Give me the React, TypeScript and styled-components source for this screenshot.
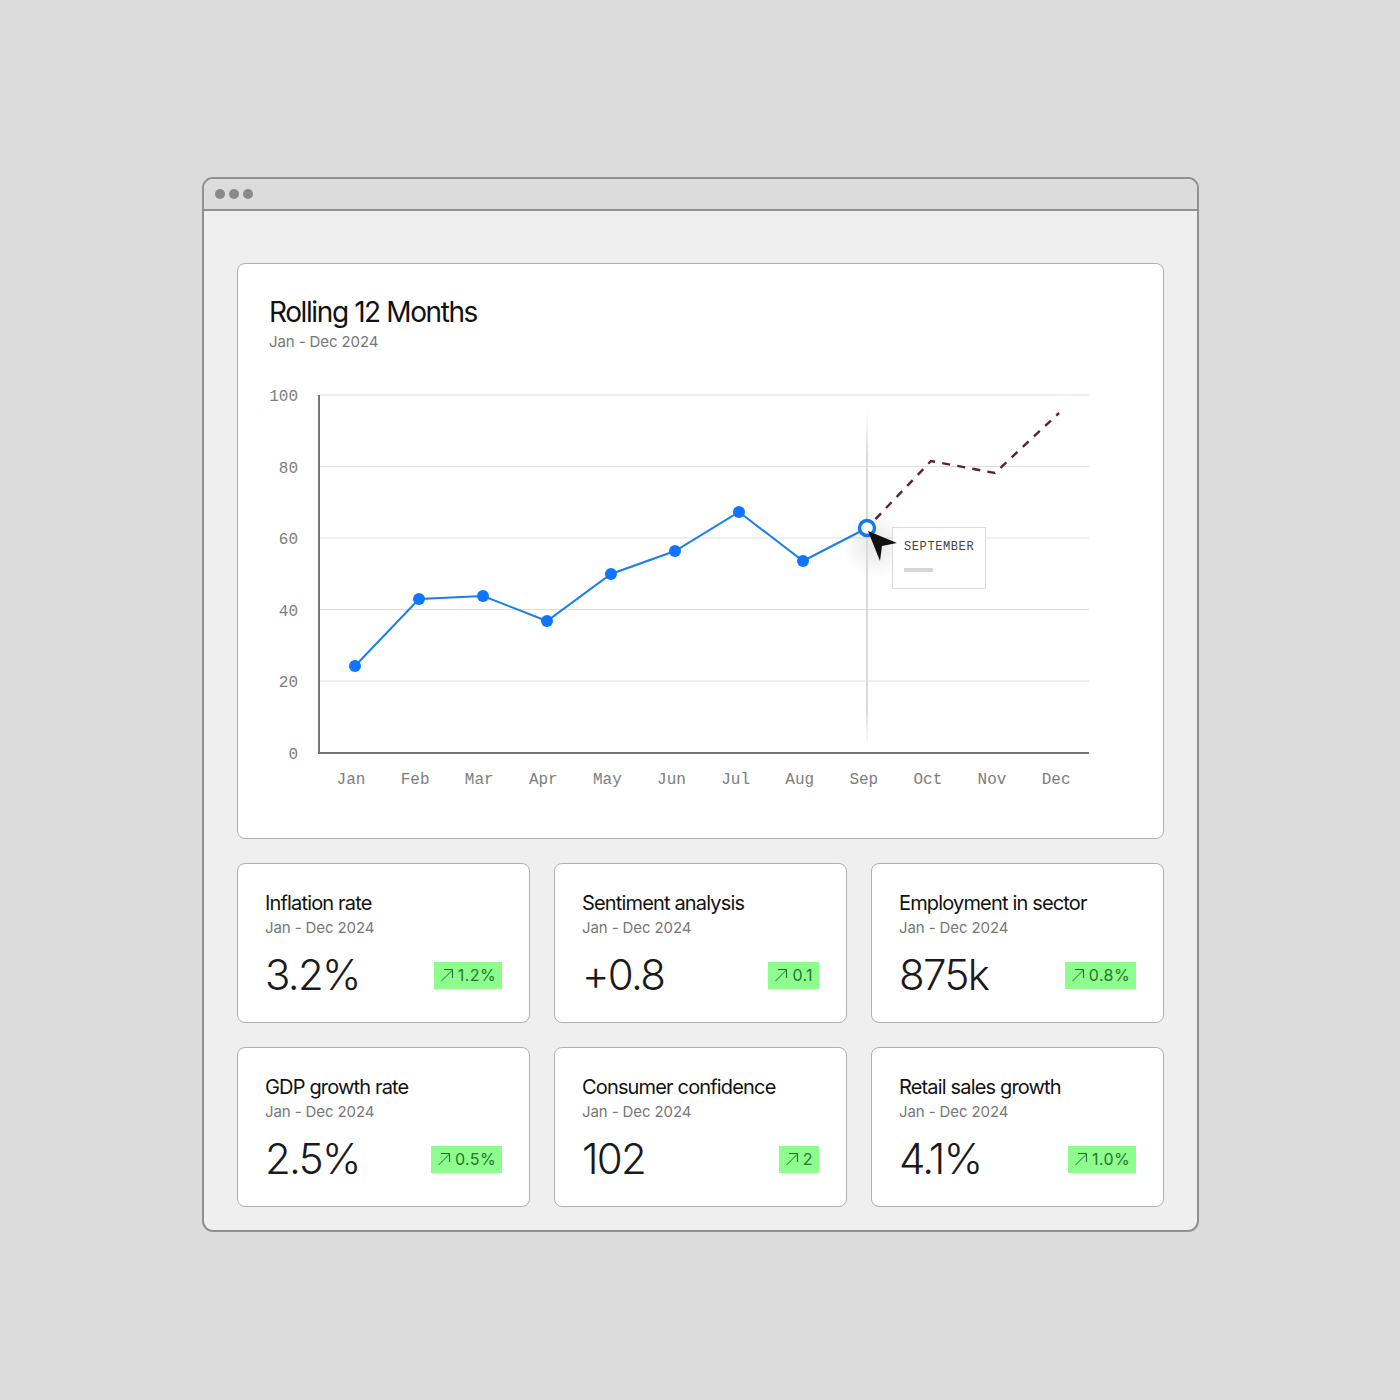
import styled, { createGlobalStyle } from 'styled-components';

const months = ['Jan', 'Feb', 'Mar', 'Apr', 'May', 'Jun', 'Jul', 'Aug', 'Sep', 'Oct', 'Nov', 'Dec'];
const ticks = [
  { label: '100', y: 395 },
  { label: '80', y: 466.5 },
  { label: '60', y: 538 },
  { label: '40', y: 609.5 },
  { label: '20', y: 681 },
  { label: '0', y: 753 },
];
const points = [
  [355, 666], [419, 599], [483, 596], [547, 621], [611, 574],
  [675, 551], [739, 512], [803, 561],
];
const stats = [
  { title: 'Inflation rate', value: '3.2%', change: '1.2%' },
  { title: 'Sentiment analysis', value: '+0.8', change: '0.1' },
  { title: 'Employment in sector', value: '875k', change: '0.8%' },
  { title: 'GDP growth rate', value: '2.5%', change: '0.5%' },
  { title: 'Consumer confidence', value: '102', change: '2' },
  { title: 'Retail sales growth', value: '4.1%', change: '1.0%' },
];

const TrendArrow = () => (
  <svg width="14" height="14" viewBox="0 0 14 14" fill="none" stroke="#1c6b2a" strokeWidth="1">
    <path d="M1.5 13 L12.5 2 M4 1.5 H12.5 V10" />
  </svg>
);

const Chart = () => (
  <svg width="830" height="420" viewBox="269 380 830 420">
    <defs>
      <linearGradient id="hoverLine" x1="0" y1="0" x2="0" y2="1">
        <stop offset="0" stopColor="#dadada" stopOpacity="0" />
        <stop offset="0.14" stopColor="#dadada" />
        <stop offset="0.88" stopColor="#dadada" />
        <stop offset="1" stopColor="#dadada" stopOpacity="0" />
      </linearGradient>
      <radialGradient id="hoverGlow">
        <stop offset="0" stopColor="#000" stopOpacity="0.1" />
        <stop offset="1" stopColor="#000" stopOpacity="0" />
      </radialGradient>
    </defs>
    {ticks.slice(0, 5).map((t) => (
      <line key={t.label} x1="319" x2="1089" y1={t.y} y2={t.y} stroke="#dedede" />
    ))}
    <path d="M319 395 V753 H1089" fill="none" stroke="#767676" strokeWidth="2" />
    {ticks.map((t) => (
      <AxisText key={t.label} x="298" y={t.y + 6} textAnchor="end">{t.label}</AxisText>
    ))}
    {months.map((m, i) => (
      <AxisText key={m} x={351 + i * 64.1} y="784" textAnchor="middle">{m}</AxisText>
    ))}
    <circle cx="875" cy="545" r="32" fill="url(#hoverGlow)" />
    <rect x="866" y="410" width="2" height="338" fill="url(#hoverLine)" />
    <path
      d="M867 528 L931 461 L995 473 L1059 413"
      fill="none"
      stroke="#5e2129"
      strokeWidth="2.4"
      strokeDasharray="8 7.3"
      strokeDashoffset="3"
    />
    <polyline
      points={[...points, [867, 528]].map((p) => p.join(',')).join(' ')}
      fill="none"
      stroke="#1a7fe8"
      strokeWidth="2"
    />
    {points.map(([x, y]) => (
      <circle key={x} cx={x} cy={y} r="6" fill="#0f75ff" />
    ))}
    <circle cx="867" cy="528" r="7.5" fill="#fff" stroke="#1477ea" strokeWidth="3.4" />
  </svg>
);

export default function App() {
  return (
    <Page>
      <GlobalStyle />
      <BrowserWindow>
        <TitleBar>
          <Dot />
          <Dot />
          <Dot />
        </TitleBar>
        <Content>
          <ChartCard>
            <ChartTitle>Rolling 12 Months</ChartTitle>
            <ChartPeriod>Jan - Dec 2024</ChartPeriod>
            <ChartArea>
              <Chart />
              <Tooltip>
                <TooltipLabel>SEPTEMBER</TooltipLabel>
                <TooltipBar />
              </Tooltip>
              <Cursor width="34" height="34" viewBox="0 0 34 34">
                <path d="M2 2 L31 14 L16 17 L14 32 Z" fill="#111" />
              </Cursor>
            </ChartArea>
          </ChartCard>
          <StatGrid>
            {stats.map((s) => (
              <StatCard key={s.title}>
                <StatTitle>{s.title}</StatTitle>
                <StatPeriod>Jan - Dec 2024</StatPeriod>
                <StatRow>
                  <StatValue>{s.value}</StatValue>
                  <Badge>
                    <TrendArrow />
                    {s.change}
                  </Badge>
                </StatRow>
              </StatCard>
            ))}
          </StatGrid>
        </Content>
      </BrowserWindow>
    </Page>
  );
}

const GlobalStyle = createGlobalStyle`
  html, body {
    margin: 0;
    padding: 0;
    background: #dcdcdc;
  }
  * {
    box-sizing: border-box;
  }
`;

const Page = styled.div`
  width: 1400px;
  height: 1400px;
  padding: 177px 0 0 202px;
  font-family: Inter, "Liberation Sans", sans-serif;
  color: #111;
`;

const BrowserWindow = styled.div`
  width: 997px;
  height: 1055px;
  background: #efefef;
  border: 2px solid #909090;
  border-radius: 11px;
  overflow: hidden;
`;

const TitleBar = styled.div`
  height: 32px;
  padding-left: 11px;
  display: flex;
  align-items: center;
  gap: 4px;
  background: #dcdcdc;
  border-bottom: 2px solid #909090;
`;

const Dot = styled.span`
  width: 10px;
  height: 10px;
  border-radius: 50%;
  background: #8a8a8a;
`;

const Content = styled.div`
  padding: 52px 33px 0;
  display: flex;
  flex-direction: column;
  gap: 24px;
`;

const ChartCard = styled.section`
  height: 576px;
  padding: 31px 31px 0;
  background: #fff;
  border: 1px solid #b0b0b0;
  border-radius: 8px;
`;

const ChartTitle = styled.h1`
  margin: 0;
  font-size: 28px;
  line-height: 34px;
  font-weight: 400;
  letter-spacing: -0.05em;
`;

const ChartPeriod = styled.div`
  margin-top: 2px;
  font-size: 15px;
  line-height: 22px;
  letter-spacing: -0.1px;
  color: #777;
`;

const ChartArea = styled.div`
  position: relative;
  margin-top: 27px;
`;

const AxisText = styled.text`
  font-family: "Liberation Mono", monospace;
  font-size: 16px;
  fill: #7d7d7d;
`;

const Tooltip = styled.div`
  position: absolute;
  left: 623px;
  top: 147px;
  width: 94px;
  height: 62px;
  padding: 12px 11px 0;
  background: #fff;
  border: 1px solid #dcdcdc;
`;

const TooltipLabel = styled.div`
  font-family: "Liberation Mono", monospace;
  font-size: 12px;
  line-height: 14px;
  letter-spacing: 0.6px;
  color: #444;
`;

const TooltipBar = styled.div`
  width: 29px;
  height: 4px;
  margin-top: 14px;
  background: #d6d6d6;
`;

const Cursor = styled.svg`
  position: absolute;
  left: 597px;
  top: 149px;
`;

const StatGrid = styled.div`
  display: grid;
  grid-template-columns: repeat(3, 293px);
  grid-auto-rows: 160px;
  gap: 24px;
`;

const StatCard = styled.article`
  padding: 27px 27px 0;
  background: #fff;
  border: 1px solid #b0b0b0;
  border-radius: 8px;
`;

const StatTitle = styled.h2`
  margin: 0;
  font-size: 20px;
  line-height: 24px;
  font-weight: 400;
  letter-spacing: -0.042em;
`;

const StatPeriod = styled.div`
  margin-top: 3px;
  font-size: 15px;
  line-height: 20px;
  letter-spacing: -0.1px;
  color: #777;
`;

const StatRow = styled.div`
  margin-top: 12px;
  display: flex;
  align-items: center;
  justify-content: space-between;
`;

const StatValue = styled.div`
  font-size: 42px;
  line-height: 50px;
  font-weight: 350;
  letter-spacing: -0.04em;
  color: #1a1a1a;
`;

const Badge = styled.div`
  height: 27px;
  padding: 0 6px;
  display: flex;
  align-items: center;
  gap: 4px;
  font-size: 16px;
  letter-spacing: 0.4px;
  color: #26752f;
  background: #8dfe8d;
`;
